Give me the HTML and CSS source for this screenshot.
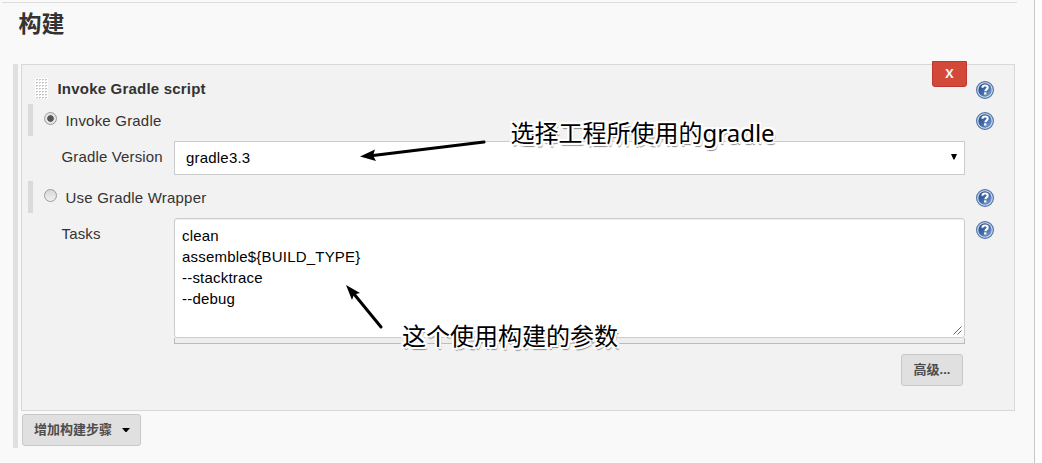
FILE: index.html
```
<!DOCTYPE html>
<html lang="zh-CN">
<head>
<meta charset="utf-8">
<title>构建</title>
<link rel="stylesheet" href="styles.css">
</head>
<body>
<svg class="defs" width="0" height="0" aria-hidden="true">
  <defs>
    <linearGradient id="ball" x1="0" y1="0" x2="1" y2="1">
      <stop offset="0" stop-color="#244a87"/>
      <stop offset=".5" stop-color="#4069a7"/>
      <stop offset="1" stop-color="#86a9d5"/>
    </linearGradient>
    <symbol id="help" viewBox="0 0 18 18">
      <circle cx="9" cy="9" r="8.4" fill="#d3deec" stroke="#4f75ab" stroke-width="1.2"/>
      <circle cx="9" cy="9" r="6.7" fill="url(#ball)"/>
      <path d="M6.400 6.700C6.500 5 7.600 4.500 9 4.500c1.700 0 2.700.8 2.700 2.100 0 1.900-2.300 1.700-2.300 3.700" fill="none" stroke="#fff" stroke-width="2.100"/>
      <rect x="8.100" y="11.300" width="2.300" height="2.300" fill="#fff"/>
    </symbol>
    <pattern id="grip" width="3" height="3" patternUnits="userSpaceOnUse">
      <rect width="3" height="3" fill="#fff"/>
      <rect x="1" y="1" width="2" height="1" fill="#c4c4c4"/>
      <rect x="1" y="2" width="1" height="1" fill="#dedede"/>
    </pattern>
  </defs>
</svg>
<main class="page">
  <h2 class="title">构建</h2>
  <section class="steps">
    <div class="step">
      <button class="remove">X</button>
      <div class="row head">
        <svg class="grip" width="13" height="21"><rect width="13" height="21" fill="url(#grip)"/></svg>
        <b class="name">Invoke Gradle script</b>
        <svg class="help"><use href="#help"/></svg>
      </div>
      <div class="row option">
        <span class="radio on"></span><span class="label">Invoke Gradle</span>
        <svg class="help"><use href="#help"/></svg>
      </div>
      <div class="row field version">
        <span class="caption">Gradle Version</span>
        <div class="select"><span>gradle3.3</span><svg width="6" height="6"><path d="M0 0h6L3.500 5.500h-1z" fill="#000"/></svg></div>
      </div>
      <div class="row option">
        <span class="radio"></span><span class="label">Use Gradle Wrapper</span>
        <svg class="help"><use href="#help"/></svg>
      </div>
      <div class="row field tasks">
        <span class="caption">Tasks</span>
        <div class="editor">
          <div class="text"><span>clean
assemble${BUILD_TYPE}
--stacktrace
--debug</span><svg class="corner" width="9" height="9"><path d="M.5 8.500l8-8M4.500 8.500l4-4" stroke="#666" fill="none"/></svg></div>
          <div class="handle"></div>
        </div>
        <svg class="help"><use href="#help"/></svg>
      </div>
      <div class="actions"><button class="btn advanced">高级...</button></div>
    </div>
    <button class="btn add"><span>增加构建步骤</span><svg width="8" height="4"><path d="M0 0h8L4.500 4h-1z" fill="#000"/></svg></button>
  </section>
  <svg class="arrows" width="1042" height="463">
    <path d="M484 142L373 155.500M381 327L354 294" stroke="#000" stroke-width="3" stroke-linecap="round"/>
    <path d="M360 156.500L375 149.500L373 155.500L376 161zM346 285L360 293L354 294.500L352 300z"/>
  </svg>
  <span class="note note-version">选择工程所使用的gradle</span>
  <span class="note note-tasks">这个使用构建的参数</span>
</main>
</body>
</html>
```
FILE: styles.css
```
* { box-sizing: border-box; }
body { margin: 0; background: #fdfdfd; color: #333; font: 15px/21px "Liberation Sans", "Noto Sans CJK SC", sans-serif; overflow: hidden; }
svg { display: block; flex: none; }
.defs { position: absolute; }
button { font: inherit; margin: 0; }
.page { position: relative; width: 1035px; height: 463px; padding: 2px 18px 0 2px; background: #f9f9f9; border-right: 1px solid #c8c8c8; }
.title { margin: 0 -1px 0 0; height: 62px; padding: 4px 0 0 16.5px; border-top: 1px solid #ddd; font-size: 23px; line-height: 35px; font-weight: 700; }
.steps { margin: 0 0 0 11px; height: 384px; padding-left: 3px; border-left: 5px solid #e0e0e0; width: 1002px; }
.step { position: relative; width: 994px; height: 347px; padding: 8px 0 0 6px; background: #f2f2f2; border: 1px solid #d8d8d8; }
.remove { position: absolute; left: 910px; top: -4px; width: 35px; height: 26px; padding: 0 0 1px; border: 1px solid #bd362f; border-radius: 0 0 3px 3px; background: #d24939; color: #f5f5f5; font: bold 12.5px/22px "Open Sans", sans-serif; }
.row { display: flex; width: 966px; }
.help { width: 18px; height: 18px; margin-left: auto; }
.head { height: 31px; padding-left: 7px; }
.grip { margin-top: 5px; }
.name { margin: 5px 0 0 9.5px; letter-spacing: .2px; }
.head .help { margin-top: 8px; }
.option { height: 32px; border-left: 5px solid #dadada; }
.radio { width: 13px; height: 13px; margin: 8px 0 0 11px; border: 1px solid #9c9c9c; border-radius: 50%; background: linear-gradient(#d8d8d8, #f0f0f0); }
.radio.on { background: radial-gradient(circle, #555 0 2.900px, #e4e4e4 3.700px); }
.label { margin: 6px 0 0 8.5px; letter-spacing: .2px; }
.option .help { margin-top: 8px; }
.field { padding-left: 33.5px; }
.caption { width: 112.5px; padding-top: 5px; letter-spacing: .15px; }
.version { padding-top: 5px; height: 45px; }
.select { display: flex; align-items: center; justify-content: space-between; width: 791px; height: 34px; padding: 0 7px 2px 11px; background: #fff; border: 1px solid #ccc; color: #000; letter-spacing: .2px; }
.tasks { padding-top: 5px; height: 141px; }
.editor { width: 791px; }
.text { display: flex; justify-content: space-between; align-items: flex-end; height: 120px; padding: 0 2px 2px 7px; background: #fff; border: 1px solid #ccc; border-radius: 3px; box-shadow: inset 0 1px 1px #eee; color: #000; white-space: pre; letter-spacing: .2px; }
.text span { align-self: flex-start; padding-top: 6px; }
.handle { height: 6px; border: 1px solid #bbb; border-top: 0; background: #eee; }
.tasks .help { margin-top: 3px; }
.btn { height: 32px; border: 1px solid #c8c8c8; border-radius: 3px; background: #e0e0e0; color: #4d4d4d; font: bold 13px/28px "Liberation Sans", "Noto Sans CJK SC", sans-serif; padding: 0; }
.advanced { width: 62px; }
.actions { display: flex; justify-content: flex-end; width: 935px; }
.add { display: flex; align-items: center; gap: 10px; width: 119px; margin: 3px 0 0 1px; padding-left: 11px; }
.arrows { position: absolute; left: 0; top: 0; }
.note { position: absolute; color: #000; font: 24px/32px "Noto Sans", "Noto Sans CJK SC", sans-serif; white-space: nowrap; text-shadow: 1px 0 #fff, -1px 0 #fff, 0 1px #fff, 0 -1px #fff, 2px 2px #fff, -2px -2px #fff, 2px -2px #fff, -2px 2px #fff, 2px 3px 1px #888; }
.note-version { left: 510.5px; top: 117px; }
.note-tasks { left: 402px; top: 320px; }
```
